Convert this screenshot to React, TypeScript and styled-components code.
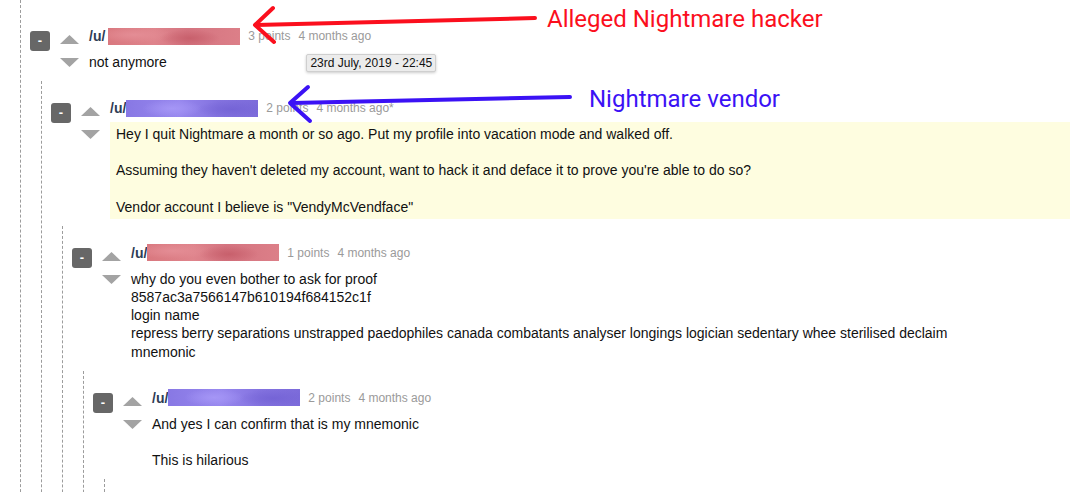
import React from 'react';
import styled, { createGlobalStyle } from 'styled-components';

const GlobalStyle = createGlobalStyle`
  html, body {
    margin: 0;
    padding: 0;
    background: #fff;
  }
  body {
    font-family: 'Liberation Sans', Arial, Helvetica, sans-serif;
    color: #111;
    overflow: hidden;
  }
`;

const Page = styled.div`
  position: relative;
  width: 1070px;
  height: 492px;
  overflow: hidden;
  padding-left: 20px;
  box-sizing: border-box;
`;

const Thread = styled.div<{ $root?: boolean; $open?: boolean }>`
  border-left: 1px dashed #9c9c9c;
  padding-left: 9px;
  padding-top: ${(p) => (p.$root ? '27px' : '18px')};
  margin-top: ${(p) => (p.$root ? '0' : '7px')};
  margin-left: ${(p) => (p.$root ? '0' : '11px')};
  min-height: ${(p) => (p.$open ? '60px' : '0')};
`;

const Row = styled.div`
  display: flex;
  align-items: flex-start;
`;

const Collapse = styled.button`
  flex: 0 0 20px;
  width: 20px;
  height: 20px;
  margin-top: 4px;
  padding: 0;
  border: 0;
  border-radius: 3px;
  background: #676767;
  color: #fff;
  font-family: 'Liberation Sans', Arial, sans-serif;
  font-weight: bold;
  font-size: 13px;
  line-height: 18px;
  text-align: center;
`;

const Votes = styled.div`
  display: flex;
  flex-direction: column;
  gap: 14px;
  flex: 0 0 19px;
  margin: 0 10px;
  padding-top: 8px;
`;

const Main = styled.div`
  flex: 1;
  min-width: 0;
`;

const Header = styled.div`
  display: flex;
  align-items: center;
  height: 18px;
  font-size: 12px;
  white-space: nowrap;
`;

const User = styled.span`
  font-weight: bold;
  font-size: 14px;
  color: #2e3c55;
`;

const tones = {
  red: 'radial-gradient(ellipse 30px 9px at 62% 60%, #c8606c, transparent), radial-gradient(ellipse 40px 8px at 20% 40%, #e48d95, transparent), linear-gradient(90deg, #d9787f, #df848c 35%, #d47480 60%, #dc7f88)',
  purple: 'radial-gradient(ellipse 30px 9px at 35% 50%, #a596f6, transparent), radial-gradient(ellipse 35px 9px at 80% 55%, #7564d6, transparent), linear-gradient(90deg, #8878e4, #9787ee 40%, #8372df 70%, #7c6bda)',
};

const NameBlur = styled.span<{ $tone: keyof typeof tones; $lead?: number }>`
  display: inline-block;
  width: 132px;
  height: 17px;
  margin-left: ${(p) => p.$lead ?? 0}px;
  background: ${(p) => tones[p.$tone]};
`;

const Meta = styled.span`
  color: #9a9a9a;
  margin-left: 8px;
`;

const Time = styled(Meta)`
  position: relative;
  margin-left: 8px;
`;

const Tooltip = styled.span`
  position: absolute;
  left: 8px;
  top: 25px;
  padding: 0 3px;
  height: 16px;
  line-height: 16px;
  font-size: 12px;
  color: #111;
  background: #ececec;
  border: 1px solid #cfcfcf;
  border-radius: 2px;
  box-shadow: 0 1px 3px rgba(0, 0, 0, 0.2);
`;

const Body = styled.div<{ $highlight?: boolean }>`
  margin-top: 5px;
  padding: 3px ${(p) => (p.$highlight ? '6px' : '0')};
  background: ${(p) => (p.$highlight ? '#fefde0' : 'transparent')};
  font-size: 14px;
  line-height: 18.2px;
  color: #111;

  p {
    margin: 0;
  }

  p + p {
    margin-top: 18px;
  }
`;

const Overlay = styled.svg`
  position: absolute;
  top: 0;
  left: 0;
  pointer-events: none;
`;

const Label = styled.span<{ $color: string; $x: number; $y: number }>`
  position: absolute;
  left: ${(p) => p.$x}px;
  top: ${(p) => p.$y}px;
  font-family: Roboto, 'Liberation Sans', sans-serif;
  font-size: 24px;
  line-height: 28px;
  color: ${(p) => p.$color};
  white-space: nowrap;
`;

const Arrow = ({ down }: { down?: boolean }) => (
  <svg width="19" height="9" viewBox="0 0 19 9">
    <polygon points={down ? '0,0 19,0 9.5,9' : '9.5,0 19,9 0,9'} fill="#a3a3a3" />
  </svg>
);

type Post = {
  tone: keyof typeof tones;
  lead?: number;
  points: number;
  edited?: boolean;
  tooltip?: string;
  highlight?: boolean;
  body: React.ReactNode;
  reply?: Post | 'more';
};

const thread: Post = {
  tone: 'red',
  lead: 3,
  points: 3,
  tooltip: '23rd July, 2019 - 22:45',
  body: 'not anymore',
  reply: {
    tone: 'purple',
    points: 2,
    edited: true,
    highlight: true,
    body: (
      <>
        <p>Hey I quit Nightmare a month or so ago. Put my profile into vacation mode and walked off.</p>
        <p>Assuming they haven't deleted my account, want to hack it and deface it to prove you're able to do so?</p>
        <p>Vendor account I believe is "VendyMcVendface"</p>
      </>
    ),
    reply: {
      tone: 'red',
      points: 1,
      body: (
        <>
          why do you even bother to ask for proof
          <br />
          8587ac3a7566147b610194f684152c1f
          <br />
          login name
          <br />
          repress berry separations unstrapped paedophiles canada combatants analyser longings logician sedentary whee sterilised declaim
          <br />
          mnemonic
        </>
      ),
      reply: {
        tone: 'purple',
        points: 2,
        body: (
          <>
            <p>And yes I can confirm that is my mnemonic</p>
            <p>This is hilarious</p>
          </>
        ),
        reply: 'more',
      },
    },
  },
};

const CommentView = ({ post }: { post: Post }) => (
  <div>
    <Row>
      <Collapse>-</Collapse>
      <Votes>
        <Arrow />
        <Arrow down />
      </Votes>
      <Main>
        <Header>
          <User>/u/</User>
          <NameBlur $tone={post.tone} $lead={post.lead} />
          <Meta>{post.points} points</Meta>
          <Time>
            4 months ago{post.edited ? '*' : ''}
            {post.tooltip && <Tooltip>{post.tooltip}</Tooltip>}
          </Time>
        </Header>
        <Body $highlight={post.highlight}>{post.body}</Body>
      </Main>
    </Row>
    {post.reply === 'more' && <Thread $open />}
    {post.reply && post.reply !== 'more' && (
      <Thread>
        <CommentView post={post.reply} />
      </Thread>
    )}
  </div>
);

const App = () => {
  return (
    <Page>
      <GlobalStyle />
      <Thread $root>
        <CommentView post={thread} />
      </Thread>

      <Overlay width="1070" height="492" viewBox="0 0 1070 492">
        <g fill="none" strokeWidth="4" strokeLinecap="round" strokeLinejoin="round">
          <g stroke="#fb0f1d">
            <path d="M535 18 L256 25" />
            <path d="M273 8 L255 25 L274 42" />
          </g>
          <g stroke="#3b12f5">
            <path d="M570 97 L292 103" />
            <path d="M308 87 L290 103 L310 121" />
          </g>
        </g>
      </Overlay>
      <Label $color="#fb0f1d" $x={547} $y={5}>Alleged Nightmare hacker</Label>
      <Label $color="#3b12f5" $x={589} $y={85}>Nightmare vendor</Label>
    </Page>
  );
};

export default App;
